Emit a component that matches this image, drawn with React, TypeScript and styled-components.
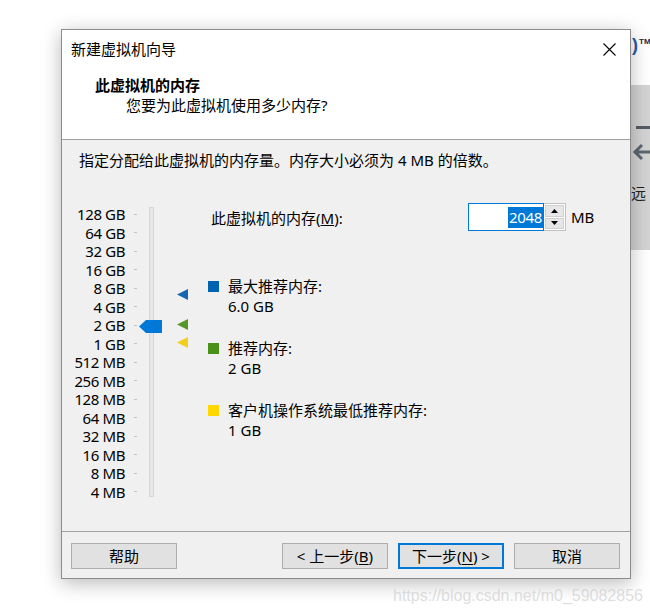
import React from 'react';
import styled, { createGlobalStyle } from 'styled-components';

const FONT = `"Noto Sans", "Noto Sans CJK SC", sans-serif`;
const ROW = 18.5;

const GlobalStyle = createGlobalStyle`
  html, body {
    margin: 0;
    padding: 0;
    background: #fff;
  }
  body {
    font-family: ${FONT};
  }
`;

const Desktop = styled.div`
  position: relative;
  width: 650px;
  height: 616px;
  overflow: hidden;
  background: #fff;
  font-family: ${FONT};
  font-size: 15px;
  color: #000;
`;

// Application window behind the dialog (only its right edge shows)
const BackWindow = styled.div`
  position: absolute;
  left: 600px;
  top: 0;
  width: 50px;
  height: 616px;
  display: flex;
  flex-direction: column;
`;

const LogoRow = styled.div`
  height: 85px;
  box-sizing: border-box;
  padding: 36px 0 0 32px;
  display: flex;
  align-items: flex-start;
`;

const LogoMark = styled.span`
  font-family: 'Liberation Sans', sans-serif;
  font-weight: 700;
  font-size: 18px;
  line-height: 18px;
  color: #2a5aa8;
`;

const Trademark = styled.span`
  font-family: 'Liberation Sans', sans-serif;
  font-weight: 700;
  font-size: 8px;
  line-height: 9px;
  margin: 1px 0 0 1px;
  color: #1d2940;
`;

const GrayPanel = styled.div`
  height: 165px;
  background: #d3d3d3;
  padding-left: 36px;
  display: flex;
  flex-direction: column;
`;

const Dash = styled.div`
  width: 20px;
  height: 3px;
  margin-top: 41px;
  background: #555c63;
`;

const BackArrow = styled.svg`
  margin: 14px 0 0 -4px;
  display: block;
`;

const PeekText = styled.div`
  margin: 22px 0 0 -20px;
  white-space: nowrap;
  font-size: 15px;
  line-height: 20px;
  color: #222;
`;

const Dialog = styled.section`
  position: absolute;
  left: 61px;
  top: 29px;
  width: 570px;
  height: 550px;
  box-sizing: border-box;
  border: 1px solid #8c8c8c;
  box-shadow: 0 4px 18px rgba(0, 0, 0, 0.28);
  display: flex;
  flex-direction: column;
  background: #f0f0f0;
`;

const TitleBar = styled.header`
  height: 38px;
  flex: none;
  background: #fff;
  display: flex;
  align-items: center;
  justify-content: space-between;
  padding: 0 14px 0 9px;
  line-height: 20px;
`;

const Header = styled.div`
  height: 72px;
  flex: none;
  box-sizing: border-box;
  background: #fff;
  border-bottom: 1px solid #a0a0a0;
  padding: 7px 0 0 33px;
  line-height: 20px;
`;

const HeaderTitle = styled.div`
  font-weight: 700;
`;

const HeaderSubtitle = styled.div`
  padding-left: 31px;
`;

const Body = styled.div`
  flex: 1;
  padding: 10px 0 0 17px;
`;

const Instruction = styled.div`
  line-height: 20px;
`;

const Main = styled.div`
  display: grid;
  grid-template-columns: 129px 1fr;
  margin-top: 33px;
`;

const Slider = styled.div`
  display: flex;
  align-items: flex-start;
`;

const ScaleLabels = styled.div`
  width: 46px;
  padding-top: 2px;
  display: flex;
  flex-direction: column;
`;

const ScaleLabel = styled.div`
  height: ${ROW}px;
  line-height: ${ROW}px;
  display: flex;
  justify-content: flex-end;
  white-space: nowrap;
  letter-spacing: -0.4px;
`;

const Ticks = styled.div`
  margin-left: 9px;
  padding-top: 2px;
  display: flex;
  flex-direction: column;
`;

const Tick = styled.div`
  height: ${ROW}px;
  display: flex;
  align-items: center;
  &::before {
    content: '';
    width: 3px;
    height: 1px;
    background: #c4c4c4;
  }
`;

const Track = styled.div`
  position: relative;
  margin: 4px 0 0 12px;
  width: 5px;
  height: 290px;
  box-sizing: border-box;
  border: 1px solid #d6d6d6;
  background: #e7e7e7;
`;

const Thumb = styled.svg`
  position: absolute;
  left: -11px;
  display: block;
`;

const Markers = styled.div`
  position: relative;
  margin-left: 23px;
  width: 11px;
  height: 300px;
`;

const Marker = styled.svg`
  position: absolute;
  left: 0;
  display: block;
`;

const RightColumn = styled.div`
  display: flex;
  flex-direction: column;
`;

const MemoryRow = styled.div`
  display: flex;
  align-items: center;
  height: 28px;
`;

const MemoryLabel = styled.div`
  width: 260px;
  box-sizing: border-box;
  padding-left: 3px;
`;

const SpinBox = styled.div`
  display: flex;
  height: 28px;
`;

const SpinInput = styled.div`
  width: 76px;
  box-sizing: border-box;
  border: 1px solid #0078d7;
  background: #fff;
  display: flex;
  justify-content: flex-end;
  align-items: center;
  padding-right: 0;
`;

const Selected = styled.span`
  background: #0078d7;
  color: #fff;
  line-height: 21px;
  padding: 0 1px;
  letter-spacing: -0.3px;
`;

const SpinButtons = styled.div`
  width: 22px;
  box-sizing: border-box;
  border: 1px solid #c2c2c2;
  border-left: none;
  display: flex;
  flex-direction: column;
  background: #fff;
  padding: 1px;
  gap: 1px;
`;

const SpinButton = styled.div`
  flex: 1;
  background: #e6e6e6;
  border: 1px solid #d0d0d0;
  display: flex;
  align-items: center;
  justify-content: center;
`;

const Unit = styled.span`
  margin-left: 5px;
`;

const Legend = styled.div`
  margin-top: 46px;
  display: flex;
  flex-direction: column;
  gap: 23px;
`;

const LegendItem = styled.div`
  display: grid;
  grid-template-columns: 11px 1fr;
  column-gap: 9px;
  line-height: 19.5px;
`;

const Swatch = styled.span<{ $color: string }>`
  width: 11px;
  height: 11px;
  align-self: center;
  background: ${(p) => p.$color};
`;

const LegendValue = styled.div`
  grid-column: 2;
`;

const Footer = styled.footer`
  height: 47px;
  flex: none;
  box-sizing: border-box;
  border-top: 1px solid #a0a0a0;
  padding: 11px 10px 0 9px;
  display: flex;
  justify-content: space-between;
  align-items: flex-start;
`;

const ButtonGroup = styled.div`
  display: flex;
  gap: 10px;
`;

const Button = styled.button<{ $primary?: boolean }>`
  width: 106px;
  height: 26px;
  box-sizing: border-box;
  padding: 0;
  margin: 0;
  background: #e1e1e1;
  border: ${(p) => (p.$primary ? '2px solid #0078d7' : '1px solid #adadad')};
  font-family: ${FONT};
  font-size: 15px;
  line-height: 20px;
  color: #000;
  u {
    text-underline-offset: 2px;
  }
`;

const Watermark = styled.div`
  position: absolute;
  left: 393px;
  top: 587px;
  font-family: 'Liberation Sans', Arial, sans-serif;
  font-size: 16px;
  line-height: 18px;
  color: rgba(190, 190, 190, 0.5);
  white-space: nowrap;
`;

const scaleLabels = [
  '128 GB', '64 GB', '32 GB', '16 GB', '8 GB', '4 GB', '2 GB', '1 GB',
  '512 MB', '256 MB', '128 MB', '64 MB', '32 MB', '16 MB', '8 MB', '4 MB',
];

// 128 GB = 2^17 MB sits on row 0, every row halves the size
const rowOf = (mb: number) => 17 - Math.log2(mb);

const markers = [
  { mb: 6144, color: '#1565b4' },
  { mb: 2048, color: '#55962a' },
  { mb: 1024, color: '#f2cf18' },
];

const legend = [
  { color: '#0063b1', title: '最大推荐内存:', value: '6.0 GB' },
  { color: '#4a9119', title: '推荐内存:', value: '2 GB' },
  { color: '#ffd800', title: '客户机操作系统最低推荐内存:', value: '1 GB' },
];

const CloseIcon = () => (
  <svg width="13" height="13" viewBox="0 0 13 13">
    <path d="M0.5 0.5 L12.5 12.5 M12.5 0.5 L0.5 12.5" stroke="#000" strokeWidth="1.1" fill="none" />
  </svg>
);

const ArrowUp = () => (
  <svg width="7" height="4" viewBox="0 0 7 4">
    <path d="M3.5 0 L7 4 L0 4 Z" fill="#000" />
  </svg>
);

const ArrowDown = () => (
  <svg width="7" height="4" viewBox="0 0 7 4">
    <path d="M0 0 L7 0 L3.5 4 Z" fill="#000" />
  </svg>
);

export default function App() {
  const memoryMb = 2048;
  const thumbTop = 7.25 + ROW * rowOf(memoryMb) - 6.5;

  return (
    <Desktop>
      <GlobalStyle />
      <BackWindow>
        <LogoRow>
          <LogoMark>)</LogoMark>
          <Trademark>TM</Trademark>
        </LogoRow>
        <GrayPanel>
          <Dash />
          <BackArrow width="24" height="18" viewBox="0 0 24 18">
            <path d="M10 2 L3 9 L10 16 M3 9 H24" stroke="#5b6670" strokeWidth="3" fill="none" />
          </BackArrow>
          <PeekText>的远</PeekText>
        </GrayPanel>
      </BackWindow>

      <Dialog>
        <TitleBar>
          <span>新建虚拟机向导</span>
          <CloseIcon />
        </TitleBar>
        <Header>
          <HeaderTitle>此虚拟机的内存</HeaderTitle>
          <HeaderSubtitle>您要为此虚拟机使用多少内存?</HeaderSubtitle>
        </Header>
        <Body>
          <Instruction>指定分配给此虚拟机的内存量。内存大小必须为 4 MB 的倍数。</Instruction>
          <Main>
            <Slider>
              <ScaleLabels>
                {scaleLabels.map((l) => (
                  <ScaleLabel key={l}>{l}</ScaleLabel>
                ))}
              </ScaleLabels>
              <Ticks>
                {scaleLabels.map((l) => (
                  <Tick key={l} />
                ))}
              </Ticks>
              <Track>
                <Thumb width="23" height="13" viewBox="0 0 23 13" style={{ top: thumbTop }}>
                  <polygon points="7,0 23,0 23,13 7,13 0,6.5" fill="#0078d7" />
                </Thumb>
              </Track>
              <Markers>
                {markers.map((m) => (
                  <Marker
                    key={m.mb}
                    width="11"
                    height="11"
                    viewBox="0 0 11 11"
                    style={{ top: 10 + ROW * rowOf(m.mb) - 5.5 }}
                  >
                    <polygon points="11,0 11,11 0,5.5" fill={m.color} />
                  </Marker>
                ))}
              </Markers>
            </Slider>
            <RightColumn>
              <MemoryRow>
                <MemoryLabel>
                  此虚拟机的内存(<u>M</u>):
                </MemoryLabel>
                <SpinBox>
                  <SpinInput>
                    <Selected>2048</Selected>
                  </SpinInput>
                  <SpinButtons>
                    <SpinButton>
                      <ArrowUp />
                    </SpinButton>
                    <SpinButton>
                      <ArrowDown />
                    </SpinButton>
                  </SpinButtons>
                </SpinBox>
                <Unit>MB</Unit>
              </MemoryRow>
              <Legend>
                {legend.map((item) => (
                  <LegendItem key={item.title}>
                    <Swatch $color={item.color} />
                    <div>{item.title}</div>
                    <LegendValue>{item.value}</LegendValue>
                  </LegendItem>
                ))}
              </Legend>
            </RightColumn>
          </Main>
        </Body>
        <Footer>
          <Button>帮助</Button>
          <ButtonGroup>
            <Button>
              &lt; 上一步(<u>B</u>)
            </Button>
            <Button $primary>
              下一步(<u>N</u>) &gt;
            </Button>
            <Button>取消</Button>
          </ButtonGroup>
        </Footer>
      </Dialog>

      <Watermark>https://blog.csdn.net/m0_59082856</Watermark>
    </Desktop>
  );
}
